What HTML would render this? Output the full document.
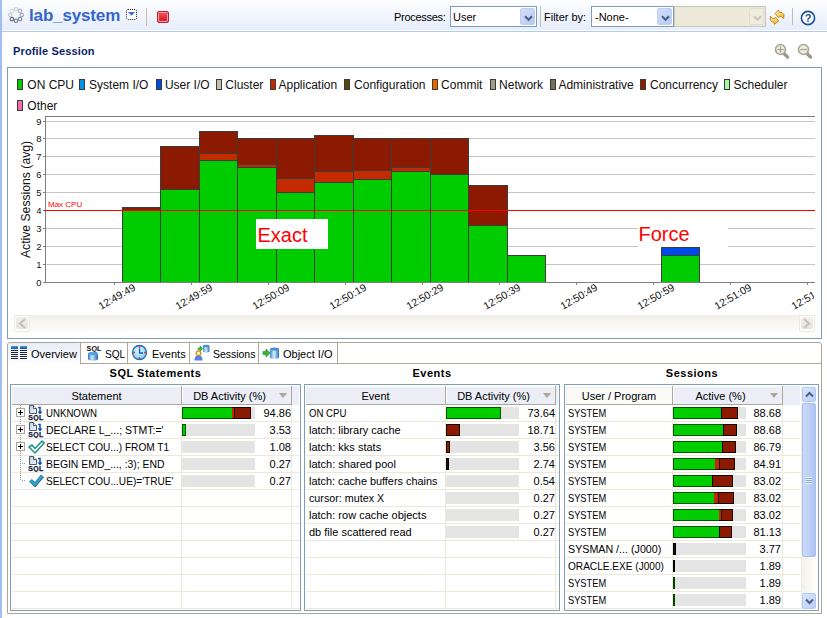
<!DOCTYPE html>
<html><head><meta charset="utf-8">
<style>
*{margin:0;padding:0;box-sizing:border-box}
html,body{width:827px;height:618px;overflow:hidden;background:#fff}
body{position:relative;font-family:"Liberation Sans",sans-serif;font-size:11px;color:#000}
.a{position:absolute}
.lstrip{left:0;top:0;width:2px;height:618px;background:#a0bef0}
.tb{left:2px;top:0px;width:825px;height:30px;background:linear-gradient(#fdfeff,#e6edfb)}
.tbline{left:2px;top:31px;width:825px;height:1px;background:#b3c8f0}
.title{left:29px;top:6px;font-weight:bold;font-size:17px;letter-spacing:-0.15px;color:#3466cf;white-space:nowrap}
.lbl{white-space:nowrap;font-size:11px}
.combo{border:1px solid #7f9db9;background:#fff;height:21px}
.cbtn{position:absolute;top:1px;right:1px;width:15px;height:17px;border-radius:2px;background:linear-gradient(135deg,#d3def9,#b6c9f3);border:1px solid #bfd0f5}
.sep{width:1px;background:#c5bfa8}
.heading{left:13px;top:45px;font-weight:bold;font-size:11px;letter-spacing:0.15px;color:#0a1f6a;white-space:nowrap}
.panel{border:1px solid #7f9db9}
.leg{position:absolute;top:79px;width:6px;height:11px;border:1px solid #3a3a3a}
.legt{position:absolute;top:77px;font-size:12px;white-space:nowrap;color:#111}
.tabpanel{left:7px;top:342px;width:815px;height:272px;border:1px solid #aca899;border-radius:3px 3px 0 0}
.tabrow{left:8px;top:343px;width:813px;height:21px;border-bottom:1px solid #aca899}
.tab{position:absolute;top:0;height:21px;border-right:1px solid #aca899;font-size:11px;white-space:nowrap}
.th{font-weight:bold;font-size:11px;white-space:nowrap;letter-spacing:0.5px}
.tbl{border:1px solid #7f9db9;background:#fff;overflow:hidden}
.hdr{position:absolute;top:0;height:20px;background:#ebeef6;border-bottom:1px solid #aca899}
.hc{position:absolute;top:0;height:19px;line-height:19px;text-align:center;border-right:1px solid #aca899;font-size:11px;white-space:nowrap;color:#000}
.rowl{position:absolute;height:1px;background:#ece9d8}
.coll{position:absolute;width:1px;background:#ece9d8}
.cell{position:absolute;font-size:11px;white-space:nowrap;line-height:17px;color:#000}
.bbg{position:absolute;height:12px;background:#e4e4e4}
.bs{position:absolute;top:0;height:12px;border:1px solid #1a1a1a}
.num{position:absolute;text-align:right;font-size:11px;line-height:17px;white-space:nowrap}
</style></head><body>
<div class="a lstrip"></div>
<div class="a tb"></div>
<div class="a tbline"></div>
<div class="a title">lab_system</div>
<div class="a lbl" style="left:394px;top:11px;letter-spacing:-0.3px">Processes:</div>
<div class="a combo" style="left:450px;top:6px;width:87px"><span class="a" style="left:2px;top:4px">User</span><div class="cbtn"><svg class="a" width="9" height="7" style="left:3px;top:6px"><path d="M1,1.2 L4.5,4.8 L8,1.2" fill="none" stroke="#4d6185" stroke-width="2.1"/></svg></div></div>
<div class="a sep" style="left:540px;top:6px;height:21px"></div>
<div class="a lbl" style="left:544px;top:11px">Filter by:</div>
<div class="a combo" style="left:591px;top:6px;width:83px"><span class="a" style="left:3px;top:4px">-None-</span><div class="cbtn"><svg class="a" width="9" height="7" style="left:3px;top:6px"><path d="M1,1.2 L4.5,4.8 L8,1.2" fill="none" stroke="#4d6185" stroke-width="2.1"/></svg></div></div>
<div class="a combo" style="left:674px;top:6px;width:92px;background:#ece9d8;border-color:#c9c7ba"><div class="cbtn" style="background:#eeecdf;border-color:#e0ded2"><svg class="a" width="9" height="7" style="left:3px;top:6px"><path d="M1,1.2 L4.5,4.8 L8,1.2" fill="none" stroke="#c9c7bb" stroke-width="2"/></svg></div></div>
<div class="a sep" style="left:792px;top:8px;height:17px"></div>
<div class="a sep" style="left:146px;top:8px;height:18px"></div>

<div class="a heading">Profile Session</div>
<!--ICONS-->
<svg class="a" width="20" height="20" style="left:6px;top:5px"><circle cx="10.00" cy="4.20" r="1.75" fill="#f2f4f8" stroke="#c8ced8" stroke-width="1.1"/><circle cx="14.10" cy="5.90" r="1.75" fill="#f2f4f8" stroke="#b0b8c6" stroke-width="1.1"/><circle cx="15.80" cy="10.00" r="1.75" fill="#f2f4f8" stroke="#98a2b2" stroke-width="1.1"/><circle cx="14.10" cy="14.10" r="1.75" fill="#f2f4f8" stroke="#808b9c" stroke-width="1.1"/><circle cx="10.00" cy="15.80" r="1.75" fill="#f2f4f8" stroke="#6a7688" stroke-width="1.1"/><circle cx="5.90" cy="14.10" r="1.75" fill="#f2f4f8" stroke="#5e6a7e" stroke-width="1.1"/><circle cx="4.20" cy="10.00" r="1.75" fill="#f2f4f8" stroke="#c0c8d4" stroke-width="1.1"/><circle cx="5.90" cy="5.90" r="1.75" fill="#f2f4f8" stroke="#d8dde6" stroke-width="1.1"/></svg>
<svg class="a" width="12" height="12" style="left:126px;top:9px"><rect x="0.5" y="0.5" width="10" height="10" rx="1.5" fill="#fff" stroke="#222" stroke-dasharray="1 1"/><path d="M2,3 H9 L5.5,6.8 Z" fill="#3b6fd6"/></svg>
<svg class="a" width="12" height="12" style="left:157px;top:11px"><defs><linearGradient id="rs" x1="0" y1="0" x2="0" y2="1"><stop offset="0" stop-color="#f0505a"/><stop offset="1" stop-color="#d81828"/></linearGradient></defs><rect x="0.5" y="0.5" width="11" height="11" rx="1.5" fill="#ee3a48" stroke="#c41c2a"/><rect x="1.5" y="1.5" width="9" height="9" rx="1" fill="none" stroke="#f8a0a8" stroke-width="1"/><rect x="2.5" y="2.5" width="7" height="7" fill="url(#rs)"/></svg>
<svg class="a" width="24" height="24" style="left:766px;top:6px"><defs><linearGradient id="sy" x1="0" y1="0" x2="1" y2="1"><stop offset="0" stop-color="#fff6c8"/><stop offset="1" stop-color="#e8b020"/></linearGradient></defs><path d="M9,7.6 L12.6,3.9 L13.2,6 L16,6.6 L17.9,8.5 L17.7,12.8 L15.6,10.6 L13.4,10.4 L12.7,11.6 Z" fill="url(#sy)" stroke="#c88a10" stroke-width="1" stroke-linejoin="round"/><path d="M4.3,10.1 L6.2,12.4 L8.4,12.6 L9.3,11.2 L12.8,14.8 L8.4,18.4 L8,16.2 L6,15.8 L4.3,14 Z" fill="url(#sy)" stroke="#c88a10" stroke-width="1" stroke-linejoin="round"/></svg>
<svg class="a" width="16" height="16" style="left:800px;top:10px"><circle cx="8" cy="8" r="6.6" fill="#fff" stroke="#1b4f9c" stroke-width="1.6"/><text x="8" y="12.2" text-anchor="middle" font-family="Liberation Sans, sans-serif" font-weight="bold" font-size="11" fill="#1b4f9c">?</text></svg>
<svg class="a" width="16" height="16" style="left:774px;top:43px"><path d="M10,10.5 L13.5,14" stroke="#9a9888" stroke-width="3.2" stroke-linecap="round"/><circle cx="6.5" cy="6.5" r="5" fill="#efebdd" stroke="#a8a698" stroke-width="1.6"/><path d="M3.2,6.5 H9.8 M6.5,3.2 V9.8" stroke="#a4a294" stroke-width="1.2"/></svg>
<svg class="a" width="16" height="16" style="left:797px;top:43px"><path d="M10,10.5 L13.5,14" stroke="#9a9888" stroke-width="3.2" stroke-linecap="round"/><circle cx="6.5" cy="6.5" r="5" fill="#efebdd" stroke="#a8a698" stroke-width="1.6"/><path d="M3.2,6.5 H9.8" stroke="#a4a294" stroke-width="1.2"/></svg>
<!--/ICONS-->

<!-- chart panel -->
<!--CHART-->
<svg class="a" style="left:0;top:0" width="827" height="340" font-family="Liberation Sans, sans-serif">
<defs><clipPath id="pc"><rect x="8" y="68" width="807" height="270"/></clipPath><linearGradient id="sbg" x1="0" y1="0" x2="0" y2="1"><stop offset="0" stop-color="#f1efe8"/><stop offset="1" stop-color="#fcfcf9"/></linearGradient><linearGradient id="btg" x1="0" y1="0" x2="0" y2="1"><stop offset="0" stop-color="#f0f0ea"/><stop offset="1" stop-color="#e4e3db"/></linearGradient></defs>
<rect x="17.5" y="79.5" width="5" height="10" fill="#00cc00" stroke="#3a3a3a" shape-rendering="crispEdges"/>
<text x="27.3" y="89" font-size="12" fill="#111">ON CPU</text>
<rect x="79.5" y="79.5" width="5" height="10" fill="#0094e7" stroke="#3a3a3a" shape-rendering="crispEdges"/>
<text x="89.1" y="89" font-size="12" fill="#111">System I/O</text>
<rect x="156.5" y="79.5" width="5" height="10" fill="#004ae7" stroke="#3a3a3a" shape-rendering="crispEdges"/>
<text x="164.9" y="89" font-size="12" fill="#111">User I/O</text>
<rect x="216.5" y="79.5" width="5" height="10" fill="#c2c2aa" stroke="#3a3a3a" shape-rendering="crispEdges"/>
<text x="225.3" y="89" font-size="12" fill="#111">Cluster</text>
<rect x="270.5" y="79.5" width="5" height="10" fill="#c02800" stroke="#3a3a3a" shape-rendering="crispEdges"/>
<text x="278.5" y="89" font-size="12" fill="#111">Application</text>
<rect x="344.5" y="79.5" width="5" height="10" fill="#5c440b" stroke="#3a3a3a" shape-rendering="crispEdges"/>
<text x="354.1" y="89" font-size="12" fill="#111">Configuration</text>
<rect x="432.5" y="79.5" width="5" height="10" fill="#e46800" stroke="#3a3a3a" shape-rendering="crispEdges"/>
<text x="441.1" y="89" font-size="12" fill="#111">Commit</text>
<rect x="490.5" y="79.5" width="5" height="10" fill="#9f9f87" stroke="#3a3a3a" shape-rendering="crispEdges"/>
<text x="499.1" y="89" font-size="12" fill="#111">Network</text>
<rect x="550.5" y="79.5" width="5" height="10" fill="#717354" stroke="#3a3a3a" shape-rendering="crispEdges"/>
<text x="558.4" y="89" font-size="12" fill="#111">Administrative</text>
<rect x="640.5" y="79.5" width="5" height="10" fill="#8b1a00" stroke="#3a3a3a" shape-rendering="crispEdges"/>
<text x="650.0" y="89" font-size="12" fill="#111">Concurrency</text>
<rect x="724.5" y="79.5" width="5" height="10" fill="#9cff9c" stroke="#3a3a3a" shape-rendering="crispEdges"/>
<text x="733.5" y="89" font-size="12" fill="#111">Scheduler</text>
<rect x="17.5" y="100.5" width="5" height="10" fill="#f06eaa" stroke="#3a3a3a" shape-rendering="crispEdges"/>
<text x="27.3" y="110" font-size="12" fill="#111">Other</text>
<text transform="translate(29.8,199.5) rotate(-90)" text-anchor="middle" font-size="12.2" fill="#111">Active Sessions (avg)</text>
<line x1="45" y1="116.5" x2="815" y2="116.5" stroke="#808080" shape-rendering="crispEdges"/>
<line x1="43" y1="282.5" x2="45" y2="282.5" stroke="#808080" shape-rendering="crispEdges"/>
<text x="41.5" y="285.6" text-anchor="end" font-size="9.4" fill="#111">0</text>
<line x1="45" y1="264.5" x2="815" y2="264.5" stroke="#c4c4c4" shape-rendering="crispEdges"/>
<line x1="43" y1="264.5" x2="45" y2="264.5" stroke="#808080" shape-rendering="crispEdges"/>
<text x="41.5" y="267.6" text-anchor="end" font-size="9.4" fill="#111">1</text>
<line x1="45" y1="246.5" x2="815" y2="246.5" stroke="#c4c4c4" shape-rendering="crispEdges"/>
<line x1="43" y1="246.5" x2="45" y2="246.5" stroke="#808080" shape-rendering="crispEdges"/>
<text x="41.5" y="249.6" text-anchor="end" font-size="9.4" fill="#111">2</text>
<line x1="45" y1="228.5" x2="815" y2="228.5" stroke="#c4c4c4" shape-rendering="crispEdges"/>
<line x1="43" y1="228.5" x2="45" y2="228.5" stroke="#808080" shape-rendering="crispEdges"/>
<text x="41.5" y="231.6" text-anchor="end" font-size="9.4" fill="#111">3</text>
<line x1="45" y1="210.5" x2="815" y2="210.5" stroke="#c4c4c4" shape-rendering="crispEdges"/>
<line x1="43" y1="210.5" x2="45" y2="210.5" stroke="#808080" shape-rendering="crispEdges"/>
<text x="41.5" y="213.6" text-anchor="end" font-size="9.4" fill="#111">4</text>
<line x1="45" y1="192.5" x2="815" y2="192.5" stroke="#c4c4c4" shape-rendering="crispEdges"/>
<line x1="43" y1="192.5" x2="45" y2="192.5" stroke="#808080" shape-rendering="crispEdges"/>
<text x="41.5" y="195.6" text-anchor="end" font-size="9.4" fill="#111">5</text>
<line x1="45" y1="174.5" x2="815" y2="174.5" stroke="#c4c4c4" shape-rendering="crispEdges"/>
<line x1="43" y1="174.5" x2="45" y2="174.5" stroke="#808080" shape-rendering="crispEdges"/>
<text x="41.5" y="177.6" text-anchor="end" font-size="9.4" fill="#111">6</text>
<line x1="45" y1="156.5" x2="815" y2="156.5" stroke="#c4c4c4" shape-rendering="crispEdges"/>
<line x1="43" y1="156.5" x2="45" y2="156.5" stroke="#808080" shape-rendering="crispEdges"/>
<text x="41.5" y="159.6" text-anchor="end" font-size="9.4" fill="#111">7</text>
<line x1="45" y1="138.5" x2="815" y2="138.5" stroke="#c4c4c4" shape-rendering="crispEdges"/>
<line x1="43" y1="138.5" x2="45" y2="138.5" stroke="#808080" shape-rendering="crispEdges"/>
<text x="41.5" y="141.6" text-anchor="end" font-size="9.4" fill="#111">8</text>
<line x1="45" y1="121.5" x2="815" y2="121.5" stroke="#c4c4c4" shape-rendering="crispEdges"/>
<line x1="43" y1="121.5" x2="45" y2="121.5" stroke="#808080" shape-rendering="crispEdges"/>
<text x="41.5" y="124.6" text-anchor="end" font-size="9.4" fill="#111">9</text>
<rect x="122.5" y="207.5" width="38" height="3" fill="#8b1a00" stroke="#3c3c3c" shape-rendering="crispEdges"/>
<rect x="122.5" y="210.5" width="38" height="72" fill="#00cc00" stroke="#3c3c3c" shape-rendering="crispEdges"/>
<rect x="160.5" y="146.5" width="39" height="43" fill="#8b1a00" stroke="#3c3c3c" shape-rendering="crispEdges"/>
<rect x="160.5" y="189.5" width="39" height="93" fill="#00cc00" stroke="#3c3c3c" shape-rendering="crispEdges"/>
<rect x="199.5" y="131.5" width="38" height="22" fill="#8b1a00" stroke="#3c3c3c" shape-rendering="crispEdges"/>
<rect x="199.5" y="153.5" width="38" height="7" fill="#c42a00" stroke="#3c3c3c" shape-rendering="crispEdges"/>
<rect x="199.5" y="160.5" width="38" height="122" fill="#00cc00" stroke="#3c3c3c" shape-rendering="crispEdges"/>
<rect x="237.5" y="138.5" width="39" height="26" fill="#8b1a00" stroke="#3c3c3c" shape-rendering="crispEdges"/>
<rect x="237.5" y="164.5" width="39" height="3" fill="#c42a00" stroke="#3c3c3c" shape-rendering="crispEdges"/>
<rect x="237.5" y="167.5" width="39" height="115" fill="#00cc00" stroke="#3c3c3c" shape-rendering="crispEdges"/>
<rect x="276.5" y="138.5" width="38" height="40" fill="#8b1a00" stroke="#3c3c3c" shape-rendering="crispEdges"/>
<rect x="276.5" y="178.5" width="38" height="14" fill="#c42a00" stroke="#3c3c3c" shape-rendering="crispEdges"/>
<rect x="276.5" y="192.5" width="38" height="90" fill="#00cc00" stroke="#3c3c3c" shape-rendering="crispEdges"/>
<rect x="314.5" y="135.5" width="39" height="36" fill="#8b1a00" stroke="#3c3c3c" shape-rendering="crispEdges"/>
<rect x="314.5" y="171.5" width="39" height="11" fill="#c42a00" stroke="#3c3c3c" shape-rendering="crispEdges"/>
<rect x="314.5" y="182.5" width="39" height="100" fill="#00cc00" stroke="#3c3c3c" shape-rendering="crispEdges"/>
<rect x="353.5" y="138.5" width="38" height="32" fill="#8b1a00" stroke="#3c3c3c" shape-rendering="crispEdges"/>
<rect x="353.5" y="170.5" width="38" height="9" fill="#c42a00" stroke="#3c3c3c" shape-rendering="crispEdges"/>
<rect x="353.5" y="179.5" width="38" height="103" fill="#00cc00" stroke="#3c3c3c" shape-rendering="crispEdges"/>
<rect x="391.5" y="138.5" width="39" height="29" fill="#8b1a00" stroke="#3c3c3c" shape-rendering="crispEdges"/>
<rect x="391.5" y="167.5" width="39" height="4" fill="#c42a00" stroke="#3c3c3c" shape-rendering="crispEdges"/>
<rect x="391.5" y="171.5" width="39" height="111" fill="#00cc00" stroke="#3c3c3c" shape-rendering="crispEdges"/>
<rect x="430.5" y="138.5" width="38" height="36" fill="#8b1a00" stroke="#3c3c3c" shape-rendering="crispEdges"/>
<rect x="430.5" y="174.5" width="38" height="108" fill="#00cc00" stroke="#3c3c3c" shape-rendering="crispEdges"/>
<rect x="468.5" y="185.5" width="39" height="40" fill="#8b1a00" stroke="#3c3c3c" shape-rendering="crispEdges"/>
<rect x="468.5" y="225.5" width="39" height="57" fill="#00cc00" stroke="#3c3c3c" shape-rendering="crispEdges"/>
<rect x="507.5" y="255.5" width="38" height="27" fill="#00cc00" stroke="#3c3c3c" shape-rendering="crispEdges"/>
<rect x="661.5" y="247.5" width="38" height="8" fill="#004ae7" stroke="#3c3c3c" shape-rendering="crispEdges"/>
<rect x="661.5" y="255.5" width="38" height="27" fill="#00cc00" stroke="#3c3c3c" shape-rendering="crispEdges"/>
<line x1="45.5" y1="116" x2="45.5" y2="283" stroke="#808080" shape-rendering="crispEdges"/>
<line x1="45" y1="282.5" x2="815" y2="282.5" stroke="#808080" shape-rendering="crispEdges"/>
<line x1="44" y1="210.5" x2="815" y2="210.5" stroke="#ff0000" shape-rendering="crispEdges"/>
<text x="48" y="207" font-size="8" fill="#ff0000">Max CPU</text>
<rect x="256" y="219" width="72" height="30" fill="#fff"/>
<text x="257.5" y="242" font-size="20" fill="#ff0000">Exact</text>
<rect x="638" y="218" width="90" height="29" fill="#fff"/>
<text x="638.5" y="241" font-size="20" fill="#ff0000">Force</text>
<g clip-path="url(#lc)">
</g>
<defs><clipPath id="lc"><rect x="40" y="283" width="774" height="40"/></clipPath></defs>
<g clip-path="url(#lc)">
<line x1="114.5" y1="283" x2="114.5" y2="285" stroke="#808080" shape-rendering="crispEdges"/>
<text transform="translate(136.3,289.5) rotate(-30)" text-anchor="end" font-size="10.5" fill="#111">12:49:49</text>
<line x1="191.5" y1="283" x2="191.5" y2="285" stroke="#808080" shape-rendering="crispEdges"/>
<text transform="translate(213.3,289.5) rotate(-30)" text-anchor="end" font-size="10.5" fill="#111">12:49:59</text>
<line x1="268.5" y1="283" x2="268.5" y2="285" stroke="#808080" shape-rendering="crispEdges"/>
<text transform="translate(290.3,289.5) rotate(-30)" text-anchor="end" font-size="10.5" fill="#111">12:50:09</text>
<line x1="345.5" y1="283" x2="345.5" y2="285" stroke="#808080" shape-rendering="crispEdges"/>
<text transform="translate(367.3,289.5) rotate(-30)" text-anchor="end" font-size="10.5" fill="#111">12:50:19</text>
<line x1="422.5" y1="283" x2="422.5" y2="285" stroke="#808080" shape-rendering="crispEdges"/>
<text transform="translate(444.3,289.5) rotate(-30)" text-anchor="end" font-size="10.5" fill="#111">12:50:29</text>
<line x1="499.5" y1="283" x2="499.5" y2="285" stroke="#808080" shape-rendering="crispEdges"/>
<text transform="translate(521.3,289.5) rotate(-30)" text-anchor="end" font-size="10.5" fill="#111">12:50:39</text>
<line x1="576.5" y1="283" x2="576.5" y2="285" stroke="#808080" shape-rendering="crispEdges"/>
<text transform="translate(598.3,289.5) rotate(-30)" text-anchor="end" font-size="10.5" fill="#111">12:50:49</text>
<line x1="653.5" y1="283" x2="653.5" y2="285" stroke="#808080" shape-rendering="crispEdges"/>
<text transform="translate(675.3,289.5) rotate(-30)" text-anchor="end" font-size="10.5" fill="#111">12:50:59</text>
<line x1="730.5" y1="283" x2="730.5" y2="285" stroke="#808080" shape-rendering="crispEdges"/>
<text transform="translate(752.3,289.5) rotate(-30)" text-anchor="end" font-size="10.5" fill="#111">12:51:09</text>
<line x1="807.5" y1="283" x2="807.5" y2="285" stroke="#808080" shape-rendering="crispEdges"/>
<text transform="translate(829.3,289.5) rotate(-30)" text-anchor="end" font-size="10.5" fill="#111">12:51:19</text>
</g>
<rect x="14" y="315" width="801" height="17" fill="url(#sbg)"/>
<rect x="14.5" y="315.5" width="15" height="16" rx="2" fill="#fff" stroke="#e8e8e0"/>
<rect x="16" y="317" width="12" height="12" rx="2" fill="url(#btg)"/>
<path d="M25,319 L20,323.5 L25,328" fill="none" stroke="#c2c2b8" stroke-width="2"/>
<rect x="799.5" y="315.5" width="15" height="16" rx="2" fill="#fff" stroke="#e8e8e0"/>
<rect x="801" y="317" width="12" height="12" rx="2" fill="url(#btg)"/>
<path d="M804,319 L809,323.5 L804,328" fill="none" stroke="#c2c2b8" stroke-width="2"/>
</svg>
<!--/CHART-->
<div class="a panel" style="left:7px;top:67px;width:815px;height:272px"></div>

<!-- tab panel -->
<div class="a tabpanel"></div>
<div class="a tabrow"></div>
<!--TABS-->
<div class="a" style="left:8px;top:343px;width:72px;height:21px;background:linear-gradient(#e8ecf8,#f6f8fd 60%,#fff);border-radius:2px 2px 0 0"></div>
<div class="a" style="left:80px;top:343px;width:1px;height:20px;background:#aca899"></div>
<div class="a" style="left:127px;top:343px;width:1px;height:20px;background:#aca899"></div>
<div class="a" style="left:189px;top:343px;width:1px;height:20px;background:#aca899"></div>
<div class="a" style="left:258px;top:343px;width:1px;height:20px;background:#aca899"></div>
<div class="a" style="left:337px;top:343px;width:1px;height:20px;background:#aca899"></div>
<div class="a" style="left:80px;top:363px;width:741px;height:1px;background:#aca899"></div>
<svg class="a" width="18" height="14" style="left:11px;top:346px" shape-rendering="crispEdges"><defs><linearGradient id="ov" x1="0" y1="0" x2="0" y2="1"><stop offset="0" stop-color="#4aa0e0"/><stop offset="1" stop-color="#104c90"/></linearGradient></defs><rect x="0" y="0" width="7" height="3" fill="url(#ov)"/><rect x="0" y="4" width="7" height="1" fill="#1e2638"/><rect x="0" y="6" width="7" height="1" fill="#1e2638"/><rect x="0" y="8" width="7" height="1" fill="#1e2638"/><rect x="0" y="10" width="7" height="1" fill="#1e2638"/><rect x="0" y="12" width="7" height="1" fill="#1e2638"/><rect x="9" y="0" width="7" height="3" fill="url(#ov)"/><rect x="9" y="4" width="7" height="1" fill="#1e2638"/><rect x="9" y="6" width="7" height="1" fill="#1e2638"/><rect x="9" y="8" width="7" height="1" fill="#1e2638"/><rect x="9" y="10" width="7" height="1" fill="#1e2638"/><rect x="9" y="12" width="7" height="1" fill="#1e2638"/></svg>
<div class="a" style="left:31px;top:348px;font-size:11px;white-space:nowrap">Overview</div>
<svg class="a" width="16" height="17" style="left:86px;top:345px"><defs><linearGradient id="cy" x1="0" y1="0" x2="1" y2="0"><stop offset="0" stop-color="#2a78c0"/><stop offset="0.4" stop-color="#c8ecff"/><stop offset="1" stop-color="#2a68b0"/></linearGradient></defs><text x="0.6" y="6.2" font-family="Liberation Sans, sans-serif" font-weight="bold" font-size="7.2" fill="#111">SQL</text><path d="M2,8.5 V14 C2,16.2 12,16.2 12,14 V8.5 Z" fill="url(#cy)"/><ellipse cx="7" cy="8.5" rx="5" ry="1.7" fill="#5aa2de"/></svg>
<div class="a" style="left:105px;top:348px;font-size:11px;white-space:nowrap;transform:scaleX(0.92);transform-origin:0 0">SQL</div>
<svg class="a" width="17" height="17" style="left:131px;top:344px"><defs><radialGradient id="cl" cx="0.45" cy="0.4" r="0.6"><stop offset="0" stop-color="#f2fbff"/><stop offset="1" stop-color="#7cc8f2"/></radialGradient></defs><circle cx="8.5" cy="8.5" r="7" fill="url(#cl)" stroke="#1a6ec0" stroke-width="1.3"/><path d="M8.5,2 V4 M8.5,13 V15 M2,8.5 H4 M13,8.5 H15" stroke="#f23a10" stroke-width="1.3"/><path d="M8.5,4.5 V9 H12" fill="none" stroke="#1060c0" stroke-width="1.4"/></svg>
<div class="a" style="left:152px;top:348px;font-size:11px;white-space:nowrap">Events</div>
<svg class="a" width="17" height="17" style="left:193px;top:344px"><defs><linearGradient id="cy2" x1="0" y1="0" x2="1" y2="0"><stop offset="0" stop-color="#3a88cc"/><stop offset="0.45" stop-color="#d8f0ff"/><stop offset="1" stop-color="#2a70b8"/></linearGradient></defs><path d="M10,2 V7.5 C10,9 16.5,9 16.5,7.5 V2 Z" fill="url(#cy2)"/><ellipse cx="13.25" cy="2" rx="3.25" ry="1.2" fill="#4a90d0"/><path d="M5,4 H7 V1.8 L9.8,4.6 L7,7.4 V5.6 H5 Z" fill="#38b838" stroke="#1a8a1a" stroke-width="0.5"/><path d="M1.5,16.5 C1.5,12.5 3,11.5 5.5,11.5 C8,11.5 9.5,12.5 9.5,16.5 Z" fill="#5a7ee6"/><circle cx="5.5" cy="9.3" r="2.4" fill="#fff4c0" stroke="#c89010" stroke-width="1.2"/></svg>
<div class="a" style="left:213px;top:348px;font-size:11px;white-space:nowrap;transform:scaleX(0.95);transform-origin:0 0">Sessions</div>
<svg class="a" width="17" height="13" style="left:262px;top:347px"><defs><linearGradient id="cy3" x1="0" y1="0" x2="1" y2="0"><stop offset="0" stop-color="#3a88cc"/><stop offset="0.45" stop-color="#d8f0ff"/><stop offset="1" stop-color="#2a70b8"/></linearGradient></defs><path d="M8,2 V10.5 C8,12.3 17,12.3 17,10.5 V2 Z" fill="url(#cy3)"/><ellipse cx="12.5" cy="2" rx="4.5" ry="1.5" fill="#4a90d0"/><path d="M1,4.5 H4 V2 L8,6 L4,10 V7.5 H1 Z" fill="#38b838" stroke="#1a8a1a" stroke-width="0.6"/></svg>
<div class="a" style="left:283px;top:348px;font-size:11px;white-space:nowrap">Object I/O</div>
<!--/TABS-->
<!--TABLES-->
<div class="a th" style="left:10px;top:367px;width:291px;text-align:center">SQL Statements</div>
<div class="a th" style="left:304px;top:367px;width:256px;text-align:center">Events</div>
<div class="a th" style="left:564px;top:367px;width:256px;text-align:center">Sessions</div>
<div class="a tbl" style="left:10px;top:384px;width:291px;height:227px"></div>
<div class="a" style="left:12px;top:387px;width:279px;height:17px;background:#ebeef6;border-top:1px solid #f1efe2;border-left:1px solid #f1efe2"></div>
<div class="a" style="left:292px;top:386px;width:7px;height:19px;background:#ebeef6"></div>
<div class="a" style="left:12px;top:404px;width:280px;height:1px;background:#aca899"></div>
<div class="a" style="left:181px;top:386px;width:1px;height:19px;background:#aca899"></div>
<div class="a hc" style="left:12px;top:387px;width:169px;height:18px;line-height:18px;border:none;">Statement</div>
<div class="a" style="left:291px;top:386px;width:1px;height:19px;background:#aca899"></div>
<div class="a hc" style="left:182px;top:387px;width:109px;height:18px;line-height:18px;border:none;padding-right:14px">DB Activity (%)</div>
<div class="a" style="left:279px;top:393px;width:0;height:0;border-left:4px solid transparent;border-right:4px solid transparent;border-top:5px solid #aca899"></div>
<div class="a" style="left:182px;top:387px;width:1px;height:17px;background:#fff"></div>
<div class="a rowl" style="left:12px;top:421px;width:288px"></div>
<div class="a rowl" style="left:12px;top:438px;width:288px"></div>
<div class="a rowl" style="left:12px;top:455px;width:288px"></div>
<div class="a rowl" style="left:12px;top:472px;width:288px"></div>
<div class="a rowl" style="left:12px;top:489px;width:288px"></div>
<div class="a rowl" style="left:12px;top:506px;width:288px"></div>
<div class="a rowl" style="left:12px;top:523px;width:288px"></div>
<div class="a rowl" style="left:12px;top:540px;width:288px"></div>
<div class="a rowl" style="left:12px;top:557px;width:288px"></div>
<div class="a rowl" style="left:12px;top:574px;width:288px"></div>
<div class="a rowl" style="left:12px;top:591px;width:288px"></div>
<div class="a rowl" style="left:12px;top:608px;width:288px"></div>
<div class="a coll" style="left:181px;top:405px;height:204px"></div>
<div class="a coll" style="left:291px;top:405px;height:204px"></div>
<div class="a" style="left:20px;top:405px;width:1px;height:76px;background:repeating-linear-gradient(#9a9a9a 0 1px,transparent 1px 2px)"></div>
<div class="a" style="left:21px;top:463px;width:5px;height:1px;background:repeating-linear-gradient(90deg,transparent 0 1px,#9a9a9a 1px 2px)"></div>
<div class="a" style="left:21px;top:480px;width:5px;height:1px;background:repeating-linear-gradient(90deg,transparent 0 1px,#9a9a9a 1px 2px)"></div>
<svg class="a" width="9" height="9" style="left:16px;top:408px"><rect x="0.5" y="0.5" width="8" height="8" fill="#fff" stroke="#aca899"/><path d="M2,4.5 H7 M4.5,2 V7" stroke="#000" stroke-width="1"/></svg>
<svg class="a" width="9" height="9" style="left:16px;top:425px"><rect x="0.5" y="0.5" width="8" height="8" fill="#fff" stroke="#aca899"/><path d="M2,4.5 H7 M4.5,2 V7" stroke="#000" stroke-width="1"/></svg>
<svg class="a" width="9" height="9" style="left:16px;top:442px"><rect x="0.5" y="0.5" width="8" height="8" fill="#fff" stroke="#aca899"/><path d="M2,4.5 H7 M4.5,2 V7" stroke="#000" stroke-width="1"/></svg>
<svg class="a" width="16" height="16" viewBox="0 0 16 16" style="left:28px;top:405px"><defs><linearGradient id="dga" x1="0" y1="0" x2="1" y2="1"><stop offset="0" stop-color="#b9cde8"/><stop offset="1" stop-color="#f4f7fc"/></linearGradient></defs><path d="M1.5,0.5 H5.5 L8.5,3.5 V8.5 H1.5 Z" fill="url(#dga)" stroke="#4c5a6c"/><path d="M5.5,0.5 V3.5 H8.5" fill="#fff" stroke="#4c5a6c"/><path d="M10,2.5 H12 V7" fill="none" stroke="#1a56b8" stroke-width="1.6"/><path d="M9.5,6.5 H14.5 L12,9.5 Z" fill="#0c48a8"/><text x="8" y="15.3" text-anchor="middle" font-family="Liberation Sans, sans-serif" font-weight="bold" font-size="7" fill="#14143c" letter-spacing="0.3" stroke="#14143c" stroke-width="0.25">SQL</text></svg>
<svg class="a" width="16" height="16" viewBox="0 0 16 16" style="left:28px;top:422px"><defs><linearGradient id="dgb" x1="0" y1="0" x2="1" y2="1"><stop offset="0" stop-color="#b9cde8"/><stop offset="1" stop-color="#f4f7fc"/></linearGradient></defs><path d="M1.5,0.5 H5.5 L8.5,3.5 V8.5 H1.5 Z" fill="url(#dgb)" stroke="#4c5a6c"/><path d="M5.5,0.5 V3.5 H8.5" fill="#fff" stroke="#4c5a6c"/><path d="M10,2.5 H12 V7" fill="none" stroke="#1a56b8" stroke-width="1.6"/><path d="M9.5,6.5 H14.5 L12,9.5 Z" fill="#0c48a8"/><text x="8" y="15.3" text-anchor="middle" font-family="Liberation Sans, sans-serif" font-weight="bold" font-size="7" fill="#14143c" letter-spacing="0.3" stroke="#14143c" stroke-width="0.25">SQL</text></svg>
<svg class="a" width="16" height="16" viewBox="0 0 16 16" style="left:28px;top:456px"><defs><linearGradient id="dgc" x1="0" y1="0" x2="1" y2="1"><stop offset="0" stop-color="#b9cde8"/><stop offset="1" stop-color="#f4f7fc"/></linearGradient></defs><path d="M1.5,0.5 H5.5 L8.5,3.5 V8.5 H1.5 Z" fill="url(#dgc)" stroke="#4c5a6c"/><path d="M5.5,0.5 V3.5 H8.5" fill="#fff" stroke="#4c5a6c"/><path d="M10,2.5 H12 V7" fill="none" stroke="#1a56b8" stroke-width="1.6"/><path d="M9.5,6.5 H14.5 L12,9.5 Z" fill="#0c48a8"/><text x="8" y="15.3" text-anchor="middle" font-family="Liberation Sans, sans-serif" font-weight="bold" font-size="7" fill="#14143c" letter-spacing="0.3" stroke="#14143c" stroke-width="0.25">SQL</text></svg>
<svg class="a" width="17" height="14" viewBox="0 0 17 14" style="left:28px;top:440px"><path d="M1,7 L4,5 L7,8.5 L14,1 L16.2,3 L7,13 Z" fill="#fff" stroke="#1e9688" stroke-width="1.6" stroke-linejoin="round"/></svg>
<svg class="a" width="15" height="14" viewBox="0 0 15 14" style="left:29px;top:474px"><path d="M0.5,7.5 L3,5.5 L6,8.5 L12,1 L14.5,3 L6,13 Z" fill="#2aa2d6" stroke="#1a6e98" stroke-width="0.8" stroke-linejoin="round"/><path d="M3,10 L6,13 L14.5,3" fill="none" stroke="#24506a" stroke-width="1" opacity="0.6"/></svg>
<div class="cell" style="left:46px;top:405px;transform:scaleX(0.878);transform-origin:0 0">UNKNOWN</div>
<div class="num" style="left:231px;width:60px;top:405px">94.86</div>
<div class="cell" style="left:46px;top:422px;transform:scaleX(0.957);transform-origin:0 0">DECLARE L_...; STMT:='</div>
<div class="num" style="left:231px;width:60px;top:422px">3.53</div>
<div class="cell" style="left:46px;top:439px;transform:scaleX(0.918);transform-origin:0 0">SELECT COU...) FROM T1</div>
<div class="num" style="left:231px;width:60px;top:439px">1.08</div>
<div class="cell" style="left:46px;top:456px;transform:scaleX(0.946);transform-origin:0 0">BEGIN EMD_..., :3); END</div>
<div class="num" style="left:231px;width:60px;top:456px">0.27</div>
<div class="cell" style="left:46px;top:473px;transform:scaleX(0.919);transform-origin:0 0">SELECT COU...UE)='TRUE'</div>
<div class="num" style="left:231px;width:60px;top:473px">0.27</div>
<div class="bbg" style="left:182px;top:407px;width:73px"><div class="bs" style="left:0px;width:51px;background:#00cc00;border-color:#005a00"></div><div class="bs" style="left:50px;width:2px;background:#c42a00;border-color:#2a0800;border-left-width:0;border-right-width:0"></div><div class="bs" style="left:52px;width:17px;background:#8b1a00;border-color:#1a0400"></div></div>
<div class="bbg" style="left:182px;top:424px;width:73px"><div class="bs" style="left:0px;width:4px;background:#00cc00;border-color:#005a00"></div></div>
<div class="bbg" style="left:182px;top:441px;width:73px"></div>
<div class="bbg" style="left:182px;top:458px;width:73px"></div>
<div class="bbg" style="left:182px;top:475px;width:73px"></div>
<div class="a tbl" style="left:304px;top:384px;width:256px;height:227px"></div>
<div class="a" style="left:306px;top:387px;width:249px;height:17px;background:#ebeef6;border-top:1px solid #f1efe2;border-left:1px solid #f1efe2"></div>
<div class="a" style="left:556px;top:386px;width:2px;height:19px;background:#ebeef6"></div>
<div class="a" style="left:306px;top:404px;width:250px;height:1px;background:#aca899"></div>
<div class="a" style="left:445px;top:386px;width:1px;height:19px;background:#aca899"></div>
<div class="a hc" style="left:306px;top:387px;width:139px;height:18px;line-height:18px;border:none;">Event</div>
<div class="a" style="left:555px;top:386px;width:1px;height:19px;background:#aca899"></div>
<div class="a hc" style="left:446px;top:387px;width:109px;height:18px;line-height:18px;border:none;padding-right:14px">DB Activity (%)</div>
<div class="a" style="left:543px;top:393px;width:0;height:0;border-left:4px solid transparent;border-right:4px solid transparent;border-top:5px solid #aca899"></div>
<div class="a" style="left:446px;top:387px;width:1px;height:17px;background:#fff"></div>
<div class="a rowl" style="left:306px;top:421px;width:253px"></div>
<div class="a rowl" style="left:306px;top:438px;width:253px"></div>
<div class="a rowl" style="left:306px;top:455px;width:253px"></div>
<div class="a rowl" style="left:306px;top:472px;width:253px"></div>
<div class="a rowl" style="left:306px;top:489px;width:253px"></div>
<div class="a rowl" style="left:306px;top:506px;width:253px"></div>
<div class="a rowl" style="left:306px;top:523px;width:253px"></div>
<div class="a rowl" style="left:306px;top:540px;width:253px"></div>
<div class="a rowl" style="left:306px;top:557px;width:253px"></div>
<div class="a rowl" style="left:306px;top:574px;width:253px"></div>
<div class="a rowl" style="left:306px;top:591px;width:253px"></div>
<div class="a rowl" style="left:306px;top:608px;width:253px"></div>
<div class="a coll" style="left:445px;top:405px;height:204px"></div>
<div class="a coll" style="left:555px;top:405px;height:204px"></div>
<div class="cell" style="left:309px;top:405px;transform:scaleX(0.874);transform-origin:0 0">ON CPU</div>
<div class="num" style="left:495px;width:60px;top:405px">73.64</div>
<div class="bbg" style="left:446px;top:407px;width:73px"><div class="bs" style="left:0px;width:55px;background:#00cc00;border-color:#005a00"></div></div>
<div class="cell" style="left:309px;top:422px">latch: library cache</div>
<div class="num" style="left:495px;width:60px;top:422px">18.71</div>
<div class="bbg" style="left:446px;top:424px;width:73px"><div class="bs" style="left:0px;width:14px;background:#8b1a00;border-color:#1a0400"></div></div>
<div class="cell" style="left:309px;top:439px">latch: kks stats</div>
<div class="num" style="left:495px;width:60px;top:439px">3.56</div>
<div class="bbg" style="left:446px;top:441px;width:73px"><div class="bs" style="left:0px;width:4px;background:#8b1a00;border-color:#1a0400"></div></div>
<div class="cell" style="left:309px;top:456px">latch: shared pool</div>
<div class="num" style="left:495px;width:60px;top:456px">2.74</div>
<div class="bbg" style="left:446px;top:458px;width:73px"><div class="bs" style="left:0px;width:3px;background:#111111;border-color:#000000"></div></div>
<div class="cell" style="left:309px;top:473px;transform:scaleX(0.987);transform-origin:0 0">latch: cache buffers chains</div>
<div class="num" style="left:495px;width:60px;top:473px">0.54</div>
<div class="bbg" style="left:446px;top:475px;width:73px"></div>
<div class="cell" style="left:309px;top:490px;transform:scaleX(0.977);transform-origin:0 0">cursor: mutex X</div>
<div class="num" style="left:495px;width:60px;top:490px">0.27</div>
<div class="bbg" style="left:446px;top:492px;width:73px"></div>
<div class="cell" style="left:309px;top:507px">latch: row cache objects</div>
<div class="num" style="left:495px;width:60px;top:507px">0.27</div>
<div class="bbg" style="left:446px;top:509px;width:73px"></div>
<div class="cell" style="left:309px;top:524px">db file scattered read</div>
<div class="num" style="left:495px;width:60px;top:524px">0.27</div>
<div class="bbg" style="left:446px;top:526px;width:73px"></div>
<div class="a tbl" style="left:564px;top:384px;width:255px;height:227px"></div>
<div class="a" style="left:566px;top:387px;width:216px;height:17px;background:#ebeef6;border-top:1px solid #f1efe2;border-left:1px solid #f1efe2"></div>
<div class="a" style="left:783px;top:386px;width:17px;height:19px;background:#ebeef6"></div>
<div class="a" style="left:566px;top:404px;width:217px;height:1px;background:#aca899"></div>
<div class="a" style="left:566px;top:387px;width:106px;height:17px;background:#fafaf7;border-top:1px solid #f1efe2;border-left:1px solid #f1efe2"></div>
<div class="a" style="left:672px;top:386px;width:1px;height:19px;background:#aca899"></div>
<div class="a hc" style="left:566px;top:387px;width:106px;height:18px;line-height:18px;border:none;">User / Program</div>
<div class="a" style="left:782px;top:386px;width:1px;height:19px;background:#aca899"></div>
<div class="a hc" style="left:673px;top:387px;width:109px;height:18px;line-height:18px;border:none;padding-right:14px">Active (%)</div>
<div class="a" style="left:770px;top:393px;width:0;height:0;border-left:4px solid transparent;border-right:4px solid transparent;border-top:5px solid #aca899"></div>
<div class="a" style="left:673px;top:387px;width:1px;height:17px;background:#fff"></div>
<div class="a rowl" style="left:566px;top:421px;width:235px"></div>
<div class="a rowl" style="left:566px;top:438px;width:235px"></div>
<div class="a rowl" style="left:566px;top:455px;width:235px"></div>
<div class="a rowl" style="left:566px;top:472px;width:235px"></div>
<div class="a rowl" style="left:566px;top:489px;width:235px"></div>
<div class="a rowl" style="left:566px;top:506px;width:235px"></div>
<div class="a rowl" style="left:566px;top:523px;width:235px"></div>
<div class="a rowl" style="left:566px;top:540px;width:235px"></div>
<div class="a rowl" style="left:566px;top:557px;width:235px"></div>
<div class="a rowl" style="left:566px;top:574px;width:235px"></div>
<div class="a rowl" style="left:566px;top:591px;width:235px"></div>
<div class="a rowl" style="left:566px;top:608px;width:235px"></div>
<div class="a coll" style="left:672px;top:405px;height:204px"></div>
<div class="a coll" style="left:782px;top:405px;height:204px"></div>
<div class="cell" style="left:568px;top:405px;transform:scaleX(0.843);transform-origin:0 0">SYSTEM</div>
<div class="num" style="left:721px;width:60px;top:405px">88.68</div>
<div class="bbg" style="left:673px;top:407px;width:73px"><div class="bs" style="left:0px;width:49px;background:#00cc00;border-color:#005a00"></div><div class="bs" style="left:48px;width:17px;background:#8b1a00;border-color:#1a0400"></div></div>
<div class="cell" style="left:568px;top:422px;transform:scaleX(0.843);transform-origin:0 0">SYSTEM</div>
<div class="num" style="left:721px;width:60px;top:422px">88.68</div>
<div class="bbg" style="left:673px;top:424px;width:73px"><div class="bs" style="left:0px;width:51px;background:#00cc00;border-color:#005a00"></div><div class="bs" style="left:50px;width:14px;background:#8b1a00;border-color:#1a0400"></div></div>
<div class="cell" style="left:568px;top:439px;transform:scaleX(0.843);transform-origin:0 0">SYSTEM</div>
<div class="num" style="left:721px;width:60px;top:439px">86.79</div>
<div class="bbg" style="left:673px;top:441px;width:73px"><div class="bs" style="left:0px;width:50px;background:#00cc00;border-color:#005a00"></div><div class="bs" style="left:49px;width:14px;background:#8b1a00;border-color:#1a0400"></div></div>
<div class="cell" style="left:568px;top:456px;transform:scaleX(0.843);transform-origin:0 0">SYSTEM</div>
<div class="num" style="left:721px;width:60px;top:456px">84.91</div>
<div class="bbg" style="left:673px;top:458px;width:73px"><div class="bs" style="left:0px;width:43px;background:#00cc00;border-color:#005a00"></div><div class="bs" style="left:42px;width:4px;background:#c42a00;border-color:#2a0800;border-left-width:0;border-right-width:0"></div><div class="bs" style="left:46px;width:16px;background:#8b1a00;border-color:#1a0400"></div></div>
<div class="cell" style="left:568px;top:473px;transform:scaleX(0.843);transform-origin:0 0">SYSTEM</div>
<div class="num" style="left:721px;width:60px;top:473px">83.02</div>
<div class="bbg" style="left:673px;top:475px;width:73px"><div class="bs" style="left:0px;width:40px;background:#00cc00;border-color:#005a00"></div><div class="bs" style="left:39px;width:21px;background:#8b1a00;border-color:#1a0400"></div></div>
<div class="cell" style="left:568px;top:490px;transform:scaleX(0.843);transform-origin:0 0">SYSTEM</div>
<div class="num" style="left:721px;width:60px;top:490px">83.02</div>
<div class="bbg" style="left:673px;top:492px;width:73px"><div class="bs" style="left:0px;width:42px;background:#00cc00;border-color:#005a00"></div><div class="bs" style="left:41px;width:4px;background:#c42a00;border-color:#2a0800;border-left-width:0;border-right-width:0"></div><div class="bs" style="left:45px;width:16px;background:#8b1a00;border-color:#1a0400"></div></div>
<div class="cell" style="left:568px;top:507px;transform:scaleX(0.843);transform-origin:0 0">SYSTEM</div>
<div class="num" style="left:721px;width:60px;top:507px">83.02</div>
<div class="bbg" style="left:673px;top:509px;width:73px"><div class="bs" style="left:0px;width:47px;background:#00cc00;border-color:#005a00"></div><div class="bs" style="left:46px;width:2px;background:#c42a00;border-color:#2a0800;border-left-width:0;border-right-width:0"></div><div class="bs" style="left:48px;width:12px;background:#8b1a00;border-color:#1a0400"></div></div>
<div class="cell" style="left:568px;top:524px;transform:scaleX(0.843);transform-origin:0 0">SYSTEM</div>
<div class="num" style="left:721px;width:60px;top:524px">81.13</div>
<div class="bbg" style="left:673px;top:526px;width:73px"><div class="bs" style="left:0px;width:47px;background:#00cc00;border-color:#005a00"></div><div class="bs" style="left:46px;width:13px;background:#8b1a00;border-color:#1a0400"></div></div>
<div class="cell" style="left:568px;top:541px;transform:scaleX(0.972);transform-origin:0 0">SYSMAN /... (J000)</div>
<div class="num" style="left:721px;width:60px;top:541px">3.77</div>
<div class="bbg" style="left:673px;top:543px;width:73px"><div class="bs" style="left:0px;width:3px;background:#111111;border-color:#000000"></div></div>
<div class="cell" style="left:568px;top:558px;transform:scaleX(0.917);transform-origin:0 0">ORACLE.EXE (J000)</div>
<div class="num" style="left:721px;width:60px;top:558px">1.89</div>
<div class="bbg" style="left:673px;top:560px;width:73px"><div class="bs" style="left:0px;width:2px;background:#111111;border-color:#000000"></div></div>
<div class="cell" style="left:568px;top:575px;transform:scaleX(0.843);transform-origin:0 0">SYSTEM</div>
<div class="num" style="left:721px;width:60px;top:575px">1.89</div>
<div class="bbg" style="left:673px;top:577px;width:73px"><div class="bs" style="left:0px;width:2px;background:#00aa00;border-color:#004400"></div></div>
<div class="cell" style="left:568px;top:592px;transform:scaleX(0.843);transform-origin:0 0">SYSTEM</div>
<div class="num" style="left:721px;width:60px;top:592px">1.89</div>
<div class="bbg" style="left:673px;top:594px;width:73px"><div class="bs" style="left:0px;width:2px;background:#00aa00;border-color:#004400"></div></div>
<div class="a" style="left:801px;top:386px;width:16px;height:223px;background:linear-gradient(90deg,#f3f1ec,#fefefb);border-left:1px solid #eeede5"></div>
<div class="a" style="left:802px;top:387px;width:14px;height:15px;border-radius:2px;background:linear-gradient(135deg,#dde7fc,#b9cdf5);border:1px solid #b4c8f6"></div>
<div class="a" style="left:802px;top:403px;width:14px;height:154px;border-radius:2px;background:linear-gradient(90deg,#cddaf9,#bccef6 60%,#afc3f2);border:1px solid #a8bdf0"></div>
<div class="a" style="left:802px;top:593px;width:14px;height:16px;border-radius:2px;background:linear-gradient(135deg,#dde7fc,#b9cdf5);border:1px solid #b4c8f6"></div>
<svg class="a" width="11" height="8" style="left:804px;top:391px"><path d="M2,5.5 L5.5,2 L9,5.5" fill="none" stroke="#4d6185" stroke-width="2"/></svg>
<svg class="a" width="11" height="8" style="left:804px;top:597px"><path d="M2,2.5 L5.5,6 L9,2.5" fill="none" stroke="#4d6185" stroke-width="2"/></svg>
<div class="a" style="left:806px;top:477px;width:6px;height:7px;background:repeating-linear-gradient(#eef3fe 0 1px,#8da6d6 1px 2px)"></div>
<!--/TABLES-->

</body></html>
